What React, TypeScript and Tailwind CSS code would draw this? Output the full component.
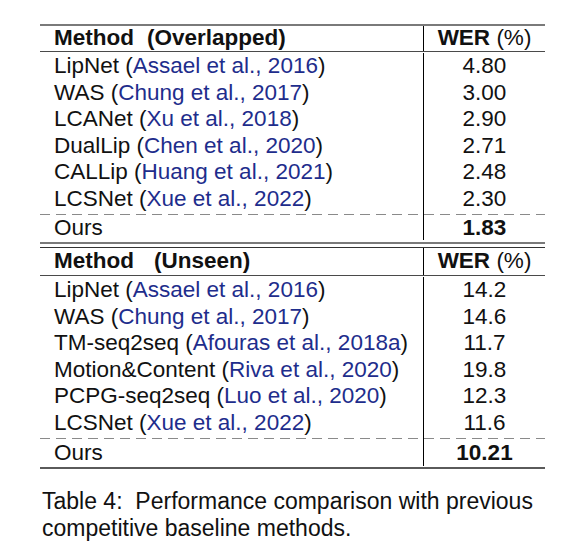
import React from 'react';

type Row = { name: string; cite: string; wer: string };

const OVERLAPPED: Row[] = [
  { name: 'LipNet', cite: 'Assael et al., 2016', wer: '4.80' },
  { name: 'WAS', cite: 'Chung et al., 2017', wer: '3.00' },
  { name: 'LCANet', cite: 'Xu et al., 2018', wer: '2.90' },
  { name: 'DualLip', cite: 'Chen et al., 2020', wer: '2.71' },
  { name: 'CALLip', cite: 'Huang et al., 2021', wer: '2.48' },
  { name: 'LCSNet', cite: 'Xue et al., 2022', wer: '2.30' },
];

const UNSEEN: Row[] = [
  { name: 'LipNet', cite: 'Assael et al., 2016', wer: '14.2' },
  { name: 'WAS', cite: 'Chung et al., 2017', wer: '14.6' },
  { name: 'TM-seq2seq', cite: 'Afouras et al., 2018a', wer: '11.7' },
  { name: 'Motion&Content', cite: 'Riva et al., 2020', wer: '19.8' },
  { name: 'PCPG-seq2seq', cite: 'Luo et al., 2020', wer: '12.3' },
  { name: 'LCSNet', cite: 'Xue et al., 2022', wer: '11.6' },
];

const GRID = 'grid grid-cols-[383px_122px]';

function Header({ label, gap, h }: { label: string; gap: string; h: string }) {
  return (
    <div className={`${GRID} ${h} items-center`}>
      <div className="pl-[14px] font-bold whitespace-nowrap">
        Method<span className={gap}>(</span>
        {label})
      </div>
      <div className="h-full flex items-center justify-center border-l border-black">
        <span className="font-bold">WER</span>&nbsp;(%)
      </div>
    </div>
  );
}

function DataRow({ row }: { row: Row }) {
  return (
    <div className={`${GRID} h-[26.5px] items-center`}>
      <div className="pl-[14px] whitespace-nowrap">
        {row.name} (<span className="text-[#1e2d8c]">{row.cite}</span>)
      </div>
      <div className="h-full flex items-center justify-center border-l border-black">{row.wer}</div>
    </div>
  );
}

function Dashed() {
  const dash = 'h-px bg-[repeating-linear-gradient(to_right,#8a8a8a_0_10px,transparent_10px_16px)]';
  return (
    <div className={`${GRID} h-[4px] items-center`}>
      <div className="h-full flex items-center">
        <div className={`w-full ${dash}`} />
      </div>
      <div className="h-full flex items-center border-l border-black">
        <div className={`w-full ${dash}`} />
      </div>
    </div>
  );
}

function Section(props: { label: string; gap: string; headH: string; oursH: string; rows: Row[]; ours: string }) {
  return (
    <div className="flex flex-col">
      <Header label={props.label} gap={props.gap} h={props.headH} />
      <div className="h-px bg-[#4a4a4a]" />
      <div className="h-px" />
      {props.rows.map((r) => (
        <DataRow key={r.name} row={r} />
      ))}
      <Dashed />
      <div className={`${GRID} ${props.oursH} items-center`}>
        <div className="pl-[14px]">Ours</div>
        <div className="h-full flex items-center justify-center border-l border-black font-bold">{props.ours}</div>
      </div>
    </div>
  );
}

export default function App() {
  return (
    <div className="w-[574px] h-[558px] bg-white text-[#111] font-['Liberation_Sans',Arial,sans-serif] pt-[24px] pl-[40px]">
      <div className="w-[505px] text-[22.5px] leading-none">
        <div className="h-[2px] bg-[#7a7a7a]" />
        <Section label="Overlapped" gap="ml-[13px]" headH="h-[25px]" oursH="h-[24px]" rows={OVERLAPPED} ours="1.83" />
        <div className="h-[2px]" />
        <div className="h-[2px] bg-[#7a7a7a]" />
        <div className="h-[3px]" />
        <div className="h-px bg-[#333]" />
        <Section label="Unseen" gap="ml-[20px]" headH="h-[27px]" oursH="h-[26px]" rows={UNSEEN} ours="10.21" />
        <div className="h-px" />
        <div className="h-[2px] bg-[#5a5a5a]" />
      </div>
      <p className="mt-[19px] w-[510px] text-[23px] leading-[27px] pl-[2px]">
        Table 4:{'\u00a0'} Performance comparison with previous competitive baseline methods.
      </p>
    </div>
  );
}
